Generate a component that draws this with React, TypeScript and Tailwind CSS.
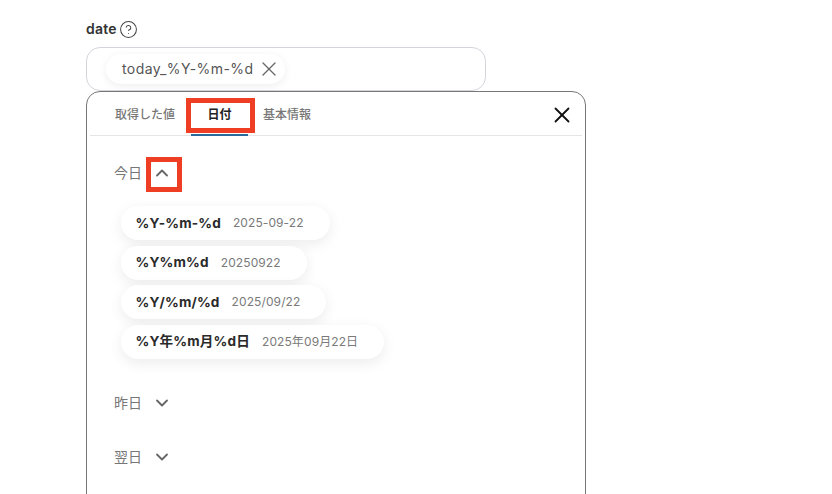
import React from "react";
import { ChevronDown, ChevronUp, CircleHelp, X } from "lucide-react";

const font = { fontFamily: '"Inter", "Noto Sans CJK JP", sans-serif' };

const Chip: React.FC<{ code: string; sample: string }> = ({ code, sample }) => (
  <div className="flex h-[34px] w-fit items-center gap-3 rounded-full bg-white pl-[14.5px] pr-[26px] shadow-[0_4px_14px_rgba(0,0,0,0.08)]">
    <span className="text-[13.6px] font-bold tracking-[0.15px] text-[#2a2a2a]">{code}</span>
    <span className="text-xs tracking-[0.1px] text-[#7a7a7a]">{sample}</span>
  </div>
);

const Section: React.FC<{ label: string }> = ({ label }) => (
  <div className="flex h-[20px] items-center gap-[10px] text-sm text-[#777]">
    <span>{label}</span>
    <ChevronDown size={20} strokeWidth={2.2} className="text-[#666]" />
  </div>
);

export default function App() {
  return (
    <div className="h-[494px] w-[832px] overflow-hidden bg-white pl-[86px] pt-[20px]" style={font}>
      <div className="flex h-[18px] items-center gap-[2px]">
        <span className="text-sm font-semibold tracking-[0.2px] text-[#333]">date</span>
        <CircleHelp size={19} strokeWidth={1.3} className="text-[#444]" />
      </div>

      <div className="mt-[9px] flex h-[44px] w-[400px] items-center rounded-[14px] border border-[#d4d4dc] pb-[1px] pl-[19px]">
        <div className="flex h-[30px] items-center gap-[4px] rounded-full bg-white pl-[16px] pr-[4px] shadow-[0_2px_8px_rgba(0,0,0,0.07)]">
          <span className="text-sm tracking-[0.42px] text-[#555]">today_%Y-%m-%d</span>
          <X size={24} strokeWidth={1.3} className="text-[#666]" />
        </div>
      </div>

      <div className="h-[420px] w-[500px] rounded-t-[14px] border border-[#777] bg-white">
        <div className="mx-[3px] flex h-[44px] items-center border-b border-[#e6e6e6] pl-[25px] pr-[7px] pt-[2px] text-xs font-medium">
          <span className="text-[#777]">取得した値</span>
          <div className="relative ml-[16px] flex h-full w-[57px] items-center justify-center text-[#222]">
            <span className="font-semibold">日付</span>
            <div className="absolute bottom-[-1px] left-0 h-[2px] w-full bg-[#2a6a9a]" />
            <div className="absolute left-[-5px] top-[4px] h-[35px] w-[69px] border-[5px] border-[#ee3f24]" />
          </div>
          <span className="ml-[15px] text-[#777]">基本情報</span>
          <X size={26} strokeWidth={1.7} className="ml-auto text-[#111]" />
        </div>

        <div className="pl-[27px] pt-[27px]">
          <div className="flex h-[20px] items-center gap-[10px] text-sm text-[#777]">
            <span>今日</span>
            <div className="relative">
              <ChevronUp size={20} strokeWidth={2.2} className="text-[#666]" />
              <div className="absolute left-[-6px] top-[-6px] h-[35px] w-[36px] border-[5px] border-[#ee3f24]" />
            </div>
          </div>

          <div className="ml-[7px] mt-[23px] flex flex-col gap-[5.5px]">
            <Chip code="%Y-%m-%d" sample="2025-09-22" />
            <Chip code="%Y%m%d" sample="20250922" />
            <Chip code="%Y/%m/%d" sample="2025/09/22" />
            <Chip code="%Y年%m月%d日" sample="2025年09月22日" />
          </div>

          <div className="mt-[34px] flex flex-col gap-[34px]">
            <Section label="昨日" />
            <Section label="翌日" />
          </div>
        </div>
      </div>
    </div>
  );
}
